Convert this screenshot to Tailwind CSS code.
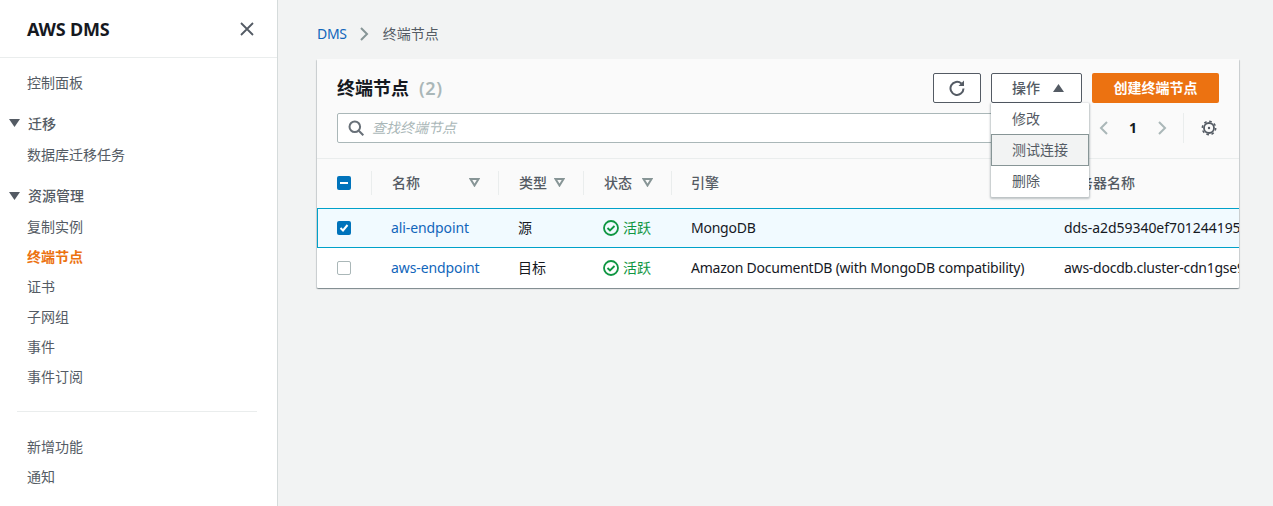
<!DOCTYPE html>
<html lang="zh-CN">
<head>
    <meta charset="UTF-8">
    <title>终端节点</title>
    <script src="https://cdn.jsdelivr.net/npm/@tailwindcss/browser@4"></script>
</head>
<body class="h-[506px] w-[1273px] overflow-hidden bg-[#f2f3f3] text-sm text-[#16191f] font-['Noto_Sans','Noto_Sans_CJK_SC',sans-serif]">
<div class="flex h-full">
    <!-- side nav -->
    <aside class="h-full w-[278px] shrink-0 border-r border-[#d5dbdb] bg-white text-[#545b64]">
        <div class="flex h-[58px] items-center justify-between border-b border-[#eaeded] pl-[27px] pr-[23px]">
            <span class="text-lg font-bold tracking-[-0.2px] text-[#16191f]">AWS DMS</span>
            <svg class="h-[14px] w-[14px]" viewBox="0 0 14 14" fill="none" stroke="#545b64" stroke-width="1.8"><path d="M1 1l12 12M13 1L1 13"/></svg>
        </div>
        <nav class="pl-[27px]">
            <a class="mt-[15px] block h-[20px] leading-5">控制面板</a>
            <div class="relative mt-[21px] h-[20px] pl-px font-medium leading-5">
                <svg class="absolute left-[-18px] top-[5px] h-2 w-[11px]" viewBox="0 0 11 8" fill="#545b64"><path d="M0 0h11L5.500 8z"/></svg>迁移</div>
            <a class="mt-[11px] block h-[20px] leading-5">数据库迁移任务</a>
            <div class="relative mt-[21px] h-[20px] pl-px font-medium leading-5">
                <svg class="absolute left-[-18px] top-[6px] h-2 w-[11px]" viewBox="0 0 11 8" fill="#545b64"><path d="M0 0h11L5.500 8z"/></svg>资源管理</div>
            <ul class="mt-[11px] flex flex-col gap-[10px] leading-5">
                <li class="h-5">复制实例</li>
                <li class="h-5 font-bold text-[#ec7211]">终端节点</li>
                <li class="h-5">证书</li>
                <li class="h-5">子网组</li>
                <li class="h-5">事件</li>
                <li class="h-5">事件订阅</li>
            </ul>
        </nav>
        <div class="ml-[17px] mr-[20px] mt-[24px] border-t border-[#eaeded]"></div>
        <ul class="mt-[25px] flex flex-col gap-[10px] pl-[27px] leading-5">
            <li class="h-5">新增功能</li>
            <li class="h-5">通知</li>
        </ul>
    </aside>

    <main class="w-[995px] pl-[39px]">
        <!-- breadcrumb -->
        <div class="flex h-[59px] items-center pt-[8px]">
            <a class="tracking-[-0.3px] text-[#1166bb]">DMS</a>
            <svg class="ml-[13px] mr-[14px] h-[14px] w-[9px]" viewBox="0 0 9 14" fill="none" stroke="#879596" stroke-width="2"><path d="M1 1l6 6-6 6"/></svg>
            <span class="text-[#545b64]">终端节点</span>
        </div>

        <!-- endpoints card -->
        <section class="relative h-[229px] w-[922px] rounded-[1px] bg-white shadow-[0_1px_1px_0_rgba(0,28,36,0.3),1px_1px_1px_0_rgba(0,28,36,0.15),-1px_1px_1px_0_rgba(0,28,36,0.15)]">
            <div class="h-[100px] border-b border-[#eaeded] bg-[#fafafa] pl-[20px] pr-[20px] pt-[14px]">
                <div class="flex h-[30px] items-center">
                    <h1 class="text-lg font-bold leading-[30px] text-[#16191f]">终端节点</h1>
                    <span class="ml-[10px] text-lg font-semibold tracking-[0.5px] text-[#aab7b8]">(2)</span>
                    <button class="ml-auto flex h-[30px] w-[48px] items-center justify-center rounded-[2px] border border-[#545b64] bg-white">
                        <svg class="h-4 w-4" viewBox="0 0 16 16" fill="none" stroke="#545b64" stroke-width="2"><path d="M12.400 3.600A6.500 6.500 0 1 0 14.500 8.500"/><path d="M15 0.500v5.500H9.500z" fill="#545b64" stroke="none"/></svg>
                    </button>
                    <button class="ml-[10px] flex h-[30px] w-[91px] items-center rounded-[2px] border border-[#545b64] bg-white pl-[20px] font-medium text-[#545b64]">
                        操作
                        <svg class="ml-[13px] h-2 w-[11px]" viewBox="0 0 11 8" fill="#545b64"><path d="M0 8h11L5.500 0z"/></svg>
                    </button>
                    <button class="ml-[10px] h-[30px] w-[127px] rounded-[2px] bg-[#ec7211] font-bold text-white">创建终端节点</button>
                </div>
                <div class="mt-[10px] flex h-[30px] items-center">
                    <div class="flex h-[30px] w-[720px] items-center rounded-[2px] border border-[#aab7b8] bg-white pl-[10px]">
                        <svg class="h-4 w-4" viewBox="0 0 16 16" fill="none" stroke="#687078" stroke-width="2"><circle cx="6.800" cy="6.800" r="5.300"/><path d="M10.800 10.800l4.500 4.500"/></svg>
                        <span class="ml-[8px] italic text-[#aab7b8]">查找终端节点</span>
                    </div>
                    <div class="ml-auto mr-[2px] flex items-center">
                        <svg class="h-[14px] w-[9px]" viewBox="0 0 9 14" fill="none" stroke="#aab7b8" stroke-width="2"><path d="M8 1L2 7l6 6"/></svg>
                        <span class="ml-[21px] mr-[21px] w-[8px] text-center text-sm font-bold text-[#16191f]">1</span>
                        <svg class="h-[14px] w-[9px]" viewBox="0 0 9 14" fill="none" stroke="#aab7b8" stroke-width="2"><path d="M1 1l6 6-6 6"/></svg>
                        <div class="ml-[16px] h-[30px] border-l border-[#eaeded]"></div>
                        <svg class="ml-[17px] h-4 w-4" viewBox="0 0 16 16" fill="none" stroke="#545b64"><circle cx="8" cy="8" r="5" stroke-width="1.800"/><circle cx="8" cy="8" r="6.700" stroke-width="1.500" stroke-dasharray="2.600 2.660"/><circle cx="8" cy="8" r="1.200" fill="#545b64" stroke="none"/></svg>
                    </div>
                </div>
            </div>

            <!-- table -->
            <div class="w-[922px] overflow-hidden">
                <div class="flex h-[49px] items-center bg-[#fafafa] pb-[2px] font-medium text-[#545b64]">
                    <div class="flex h-[24px] w-[55px] shrink-0 items-center border-r border-[#eaeded] pl-[20px]">
                        <span class="flex h-[14px] w-[14px] items-center justify-center rounded-[2px] bg-[#0073bb]"><span class="h-[2px] w-[8px] bg-white"></span></span>
                    </div>
                    <div class="flex h-[24px] w-[127px] shrink-0 items-center justify-between border-r border-[#eaeded] pl-[20px] pr-[18px]">名称
                        <svg class="h-[9px] w-[11px]" viewBox="0 0 11 9" fill="none" stroke="#879596" stroke-width="2"><path d="M1.500 1h8L5.500 7.500z"/></svg></div>
                    <div class="flex h-[24px] w-[85px] shrink-0 items-center justify-between border-r border-[#eaeded] pl-[20px] pr-[18px]">类型
                        <svg class="h-[9px] w-[11px]" viewBox="0 0 11 9" fill="none" stroke="#879596" stroke-width="2"><path d="M1.500 1h8L5.500 7.500z"/></svg></div>
                    <div class="flex h-[24px] w-[88px] shrink-0 items-center justify-between border-r border-[#eaeded] pl-[20px] pr-[18px]">状态
                        <svg class="h-[9px] w-[11px]" viewBox="0 0 11 9" fill="none" stroke="#879596" stroke-width="2"><path d="M1.500 1h8L5.500 7.500z"/></svg></div>
                    <div class="w-[374px] shrink-0 pl-[19px]">引擎</div>
                    <div class="whitespace-nowrap pl-[19px]">服务器名称</div>
                </div>
                <div class="flex h-[40px] w-[1000px] items-center whitespace-nowrap border border-[#00a1c9] bg-[#f1faff]">
                    <div class="w-[53px] shrink-0 pl-[19px]">
                        <span class="flex h-[14px] w-[14px] items-center justify-center rounded-[2px] bg-[#0073bb]">
                            <svg class="h-[10px] w-[10px]" viewBox="0 0 10 10" fill="none" stroke="#fff" stroke-width="2"><path d="M1.500 5l2.500 2.500L8.500 2"/></svg>
                        </span>
                    </div>
                    <a class="w-[127px] shrink-0 pl-[20px] tracking-[-0.1px] text-[#1166bb]">ali-endpoint</a>
                    <div class="w-[85px] shrink-0 pl-[20px]">源</div>
                    <div class="flex w-[88px] shrink-0 items-center pl-[20px] text-[#0f9642]">
                        <svg class="mr-[4px] h-4 w-4" viewBox="0 0 16 16" fill="none" stroke="#0f9642" stroke-width="1.800"><circle cx="8" cy="8" r="7"/><path d="M4.500 8l2.500 2.500 4.500-4.500"/></svg>活跃</div>
                    <div class="w-[374px] shrink-0 pl-[20px] tracking-[-0.24px]">MongoDB</div>
                    <div class="w-[194px] shrink-0 overflow-hidden pl-[19px] tracking-[-0.05px]">dds-a2d59340ef70124419500</div>
                </div>
                <div class="flex h-[40px] w-[1000px] items-center whitespace-nowrap">
                    <div class="w-[54px] shrink-0 pl-[20px]">
                        <span class="block h-[14px] w-[14px] rounded-[2px] border border-[#aab7b8] bg-white"></span>
                    </div>
                    <a class="w-[127px] shrink-0 pl-[20px] tracking-[-0.1px] text-[#1166bb]">aws-endpoint</a>
                    <div class="w-[85px] shrink-0 pl-[20px]">目标</div>
                    <div class="flex w-[88px] shrink-0 items-center pl-[20px] text-[#0f9642]">
                        <svg class="mr-[4px] h-4 w-4" viewBox="0 0 16 16" fill="none" stroke="#0f9642" stroke-width="1.800"><circle cx="8" cy="8" r="7"/><path d="M4.500 8l2.500 2.500 4.500-4.500"/></svg>活跃</div>
                    <div class="w-[374px] shrink-0 pl-[20px] tracking-[-0.24px]">Amazon DocumentDB (with MongoDB compatibility)</div>
                    <div class="w-[194px] shrink-0 overflow-hidden pl-[19px] tracking-[-0.24px]">aws-docdb.cluster-cdn1gse9</div>
                </div>
            </div>

            <!-- actions menu -->
            <ul class="absolute left-[674px] top-[44px] w-[98px] rounded-[1px] bg-white text-[#545b64] shadow-[0_1px_2px_1px_rgba(0,28,36,0.25)]">
                <li class="flex h-[31px] items-center pl-[21px]">修改</li>
                <li class="flex h-[32px] items-center border border-[#879596] bg-[#f2f3f3] pl-[20px]">测试连接</li>
                <li class="flex h-[31px] items-center pb-[1px] pl-[21px]">删除</li>
            </ul>
        </section>
    </main>
</div>
</body>
</html>
